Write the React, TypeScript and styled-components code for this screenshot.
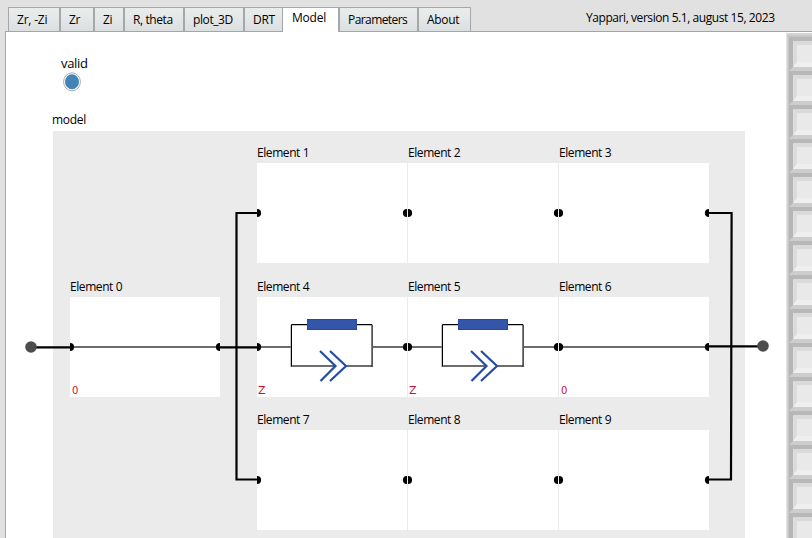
import React from "react";
import styled, { createGlobalStyle } from "styled-components";

const GlobalStyle = createGlobalStyle`
  * { box-sizing: border-box; }
  html, body { margin: 0; overflow: hidden; }
  body {
    background: #e1e1e1;
    color: #000;
    font: 12px/16px "Open Sans", "Noto Sans", sans-serif;
  }
`;

const Window = styled.div`
  display: flex;
  flex-direction: column;
  width: 812px;
  height: 538px;
  overflow: hidden;
  background: #e1e1e1;
`;

const Header = styled.header`
  display: flex;
  flex: none;
  height: 31px;
  padding: 7px 0 0 8px;
`;

const Tab = styled.div<{ $width: number; $active?: boolean }>`
  flex: none;
  width: ${(p) => p.$width}px;
  height: ${(p) => (p.$active ? 25 : 24)}px;
  padding: ${(p) => (p.$active ? "2px 0 0 9px" : "4px 0 0 8px")};
  border: solid #a5a8ab;
  border-width: 1px 1px 0 ${(p) => (p.$active ? 0 : 1)}px;
  background: ${(p) => (p.$active ? "#fff" : "linear-gradient(#ebeded, #dcdfe0)")};
  position: relative;
  z-index: ${(p) => (p.$active ? 1 : 0)};
  white-space: nowrap;
`;

const Label = styled.span<{ $spacing?: number }>`
  display: block;
  white-space: nowrap;
  letter-spacing: ${(p) => p.$spacing ?? -0.3}px;
`;

const Version = styled.div`
  margin-left: 115px;
  padding-top: 3px;
`;

const Page = styled.main`
  display: flex;
  flex: 1;
  min-height: 0;
  margin-left: 5px;
  border-top: 1px solid #a5a5a5;
  border-left: 1px solid #a5a5a5;
  background: #fff;
`;

const Workspace = styled.section`
  position: relative;
  flex: none;
  width: 780px;
  padding: 23px 0 0 47px;
`;

const Valid = styled.div`
  height: 57px;
  padding-left: 8px;
  font-size: 13px;
`;

const Lamp = styled.svg`
  display: block;
  width: 20px;
  height: 20px;
  margin: 1px 0 0 1px;
`;

const ModelCaption = styled.div`
  margin-left: -1px;
`;

const Model = styled.div`
  display: flex;
  width: 692px;
  height: 420px;
  margin-top: 3px;
  padding: 14px 0 0 17px;
  background: #ebebeb;
`;

const SeriesColumn = styled.div`
  width: 187px;
  padding-top: 134px;
`;

const Branches = styled.div`
  display: grid;
  grid-template-columns: repeat(3, 150px);
  grid-template-rows: 134px 133px 134px;
  column-gap: 1px;
`;

const ElementBlock = styled.div`
  width: 150px;
`;

const Cell = styled.div`
  height: 100px;
  margin-top: 2px;
  background: #fff;
`;

const CellDrawing = styled.svg`
  display: block;
  width: 150px;
  height: 100px;
`;

const CellCode = styled.div<{ $short: boolean }>`
  width: 20px;
  margin-top: -13px;
  padding-left: ${(p) => (p.$short ? 2 : 1)}px;
  color: #c8102e;
  font: ${(p) => (p.$short ? 10 : 11)}px/14px "DejaVu Sans", sans-serif;
`;

const Wiring = styled.svg`
  position: absolute;
  left: 0;
  top: 0;
  width: 780px;
  height: 506px;
`;

const Rail = styled.aside`
  flex: none;
  width: 26px;
  padding-left: 3px;
  background: linear-gradient(90deg, #e3e3e3 0 1px, #d1d1d1 1px 2px, #c7c7c7 2px 3px, #b8b8b8 3px);
  border-top: 1px solid #fff;
  overflow: hidden;
`;

const RailTop = styled.div`
  height: 4px;
  margin-left: -2px;
  background: linear-gradient(#dadada, #c1c1c1);
`;

const Slot = styled.div`
  width: 34px;
  height: 34px;
  border: 4px solid;
  border-color: #b8b8b8 #b8b8b8 #cdcdcd #b6b6b6;
`;

const SlotButton = styled.div`
  height: 26px;
  border: solid;
  border-width: 4px 4px 5px 4px;
  border-color: #dadada #efefef #efefef #dcdcdc;
  background: #e9e9e9;
`;

const TABS = [
  { name: "Zr, -Zi", width: 52, spacing: -0.2 },
  { name: "Zr", width: 34 },
  { name: "Zi", width: 30 },
  { name: "R, theta", width: 60, spacing: -0.4 },
  { name: "plot_3D", width: 60, spacing: -0.4 },
  { name: "DRT", width: 39 },
  { name: "Model", width: 56, active: true, spacing: -0.2 },
  { name: "Parameters", width: 79, spacing: -0.58 },
  { name: "About", width: 53 },
];

type Kind = "empty" | "short" | "impedance";

const BRANCH_ELEMENTS: Kind[] = [
  "empty", "empty", "empty",
  "impedance", "impedance", "short",
  "empty", "empty", "empty",
];

function CircuitElement({ index, kind }: { index: number; kind: Kind }) {
  return (
    <ElementBlock>
      <Label $spacing={-0.42}>Element {index}</Label>
      <Cell>
        <CellDrawing viewBox="0 0 150 100">
          {kind === "short" && <path d="M0 50H150" stroke="#6d6d6d" strokeWidth="2" />}
          {kind === "impedance" && (
            <g fill="none">
              <path d="M0 50H34M116 50H150M34 69H77M89 69H115" stroke="#6d6d6d" strokeWidth="2" />
              <path d="M50 28H34V70M100 28H115" stroke="#888" strokeWidth="1" />
              <path d="M50 27.5H34.5V69.5M100 27.5H115V69.5" stroke="#000" />
              <path d="M115.5 28V70" stroke="#555" />
              <rect x="50.5" y="22.5" width="49" height="10" fill="#3356aa" stroke="#2448a0" />
              <path d="M63 54L78.5 69L63.5 84M73 54L89 69L73 84" stroke="#234da5" strokeWidth="2.2" />
            </g>
          )}
          <circle cx="0" cy="50" r="4.1" />
          <circle cx="150" cy="50" r="4.1" />
        </CellDrawing>
        {kind !== "empty" && (
          <CellCode $short={kind === "short"}>{kind === "short" ? "0" : "Z"}</CellCode>
        )}
      </Cell>
    </ElementBlock>
  );
}

function CircuitWiring() {
  return (
    <Wiring viewBox="6 32 780 506" fill="none">
      <g stroke="#000" strokeWidth="2.2">
        <path d="M31 347.4H70M220 347.4H257" />
        <path d="M257 213H236.5V479.5H257" />
        <path d="M709 213H731.6L731 479.5H709" />
        <path d="M709 346.3H763" />
      </g>
      <circle cx="31" cy="347" r="5.8" fill="#4d4d4d" />
      <circle cx="763" cy="346" r="5.8" fill="#4d4d4d" />
    </Wiring>
  );
}

export default function App() {
  return (
    <>
      <GlobalStyle />
      <Window>
        <Header>
          {TABS.map((tab) => (
            <Tab key={tab.name} $width={tab.width} $active={tab.active}>
              <Label $spacing={tab.spacing}>{tab.name}</Label>
            </Tab>
          ))}
          <Version>
            <Label $spacing={-0.43}>Yappari, version 5.1, august 15, 2023</Label>
          </Version>
        </Header>
        <Page>
          <Workspace>
            <Valid>
              <Label>valid</Label>
              <Lamp viewBox="0 0 20 20">
                <ellipse cx="10" cy="9.8" rx="8.4" ry="9" fill="#fff" stroke="#a9adb0" />
                <ellipse cx="10" cy="9.8" rx="7" ry="7.5" fill="#4284b8" />
              </Lamp>
            </Valid>
            <ModelCaption>
              <Label>model</Label>
            </ModelCaption>
            <Model>
              <SeriesColumn>
                <CircuitElement index={0} kind="short" />
              </SeriesColumn>
              <Branches>
                {BRANCH_ELEMENTS.map((kind, i) => (
                  <CircuitElement key={i} index={i + 1} kind={kind} />
                ))}
              </Branches>
            </Model>
            <CircuitWiring />
          </Workspace>
          <Rail>
            <RailTop />
            {Array.from({ length: 15 }, (_, i) => (
              <Slot key={i}>
                <SlotButton />
              </Slot>
            ))}
          </Rail>
        </Page>
      </Window>
    </>
  );
}
